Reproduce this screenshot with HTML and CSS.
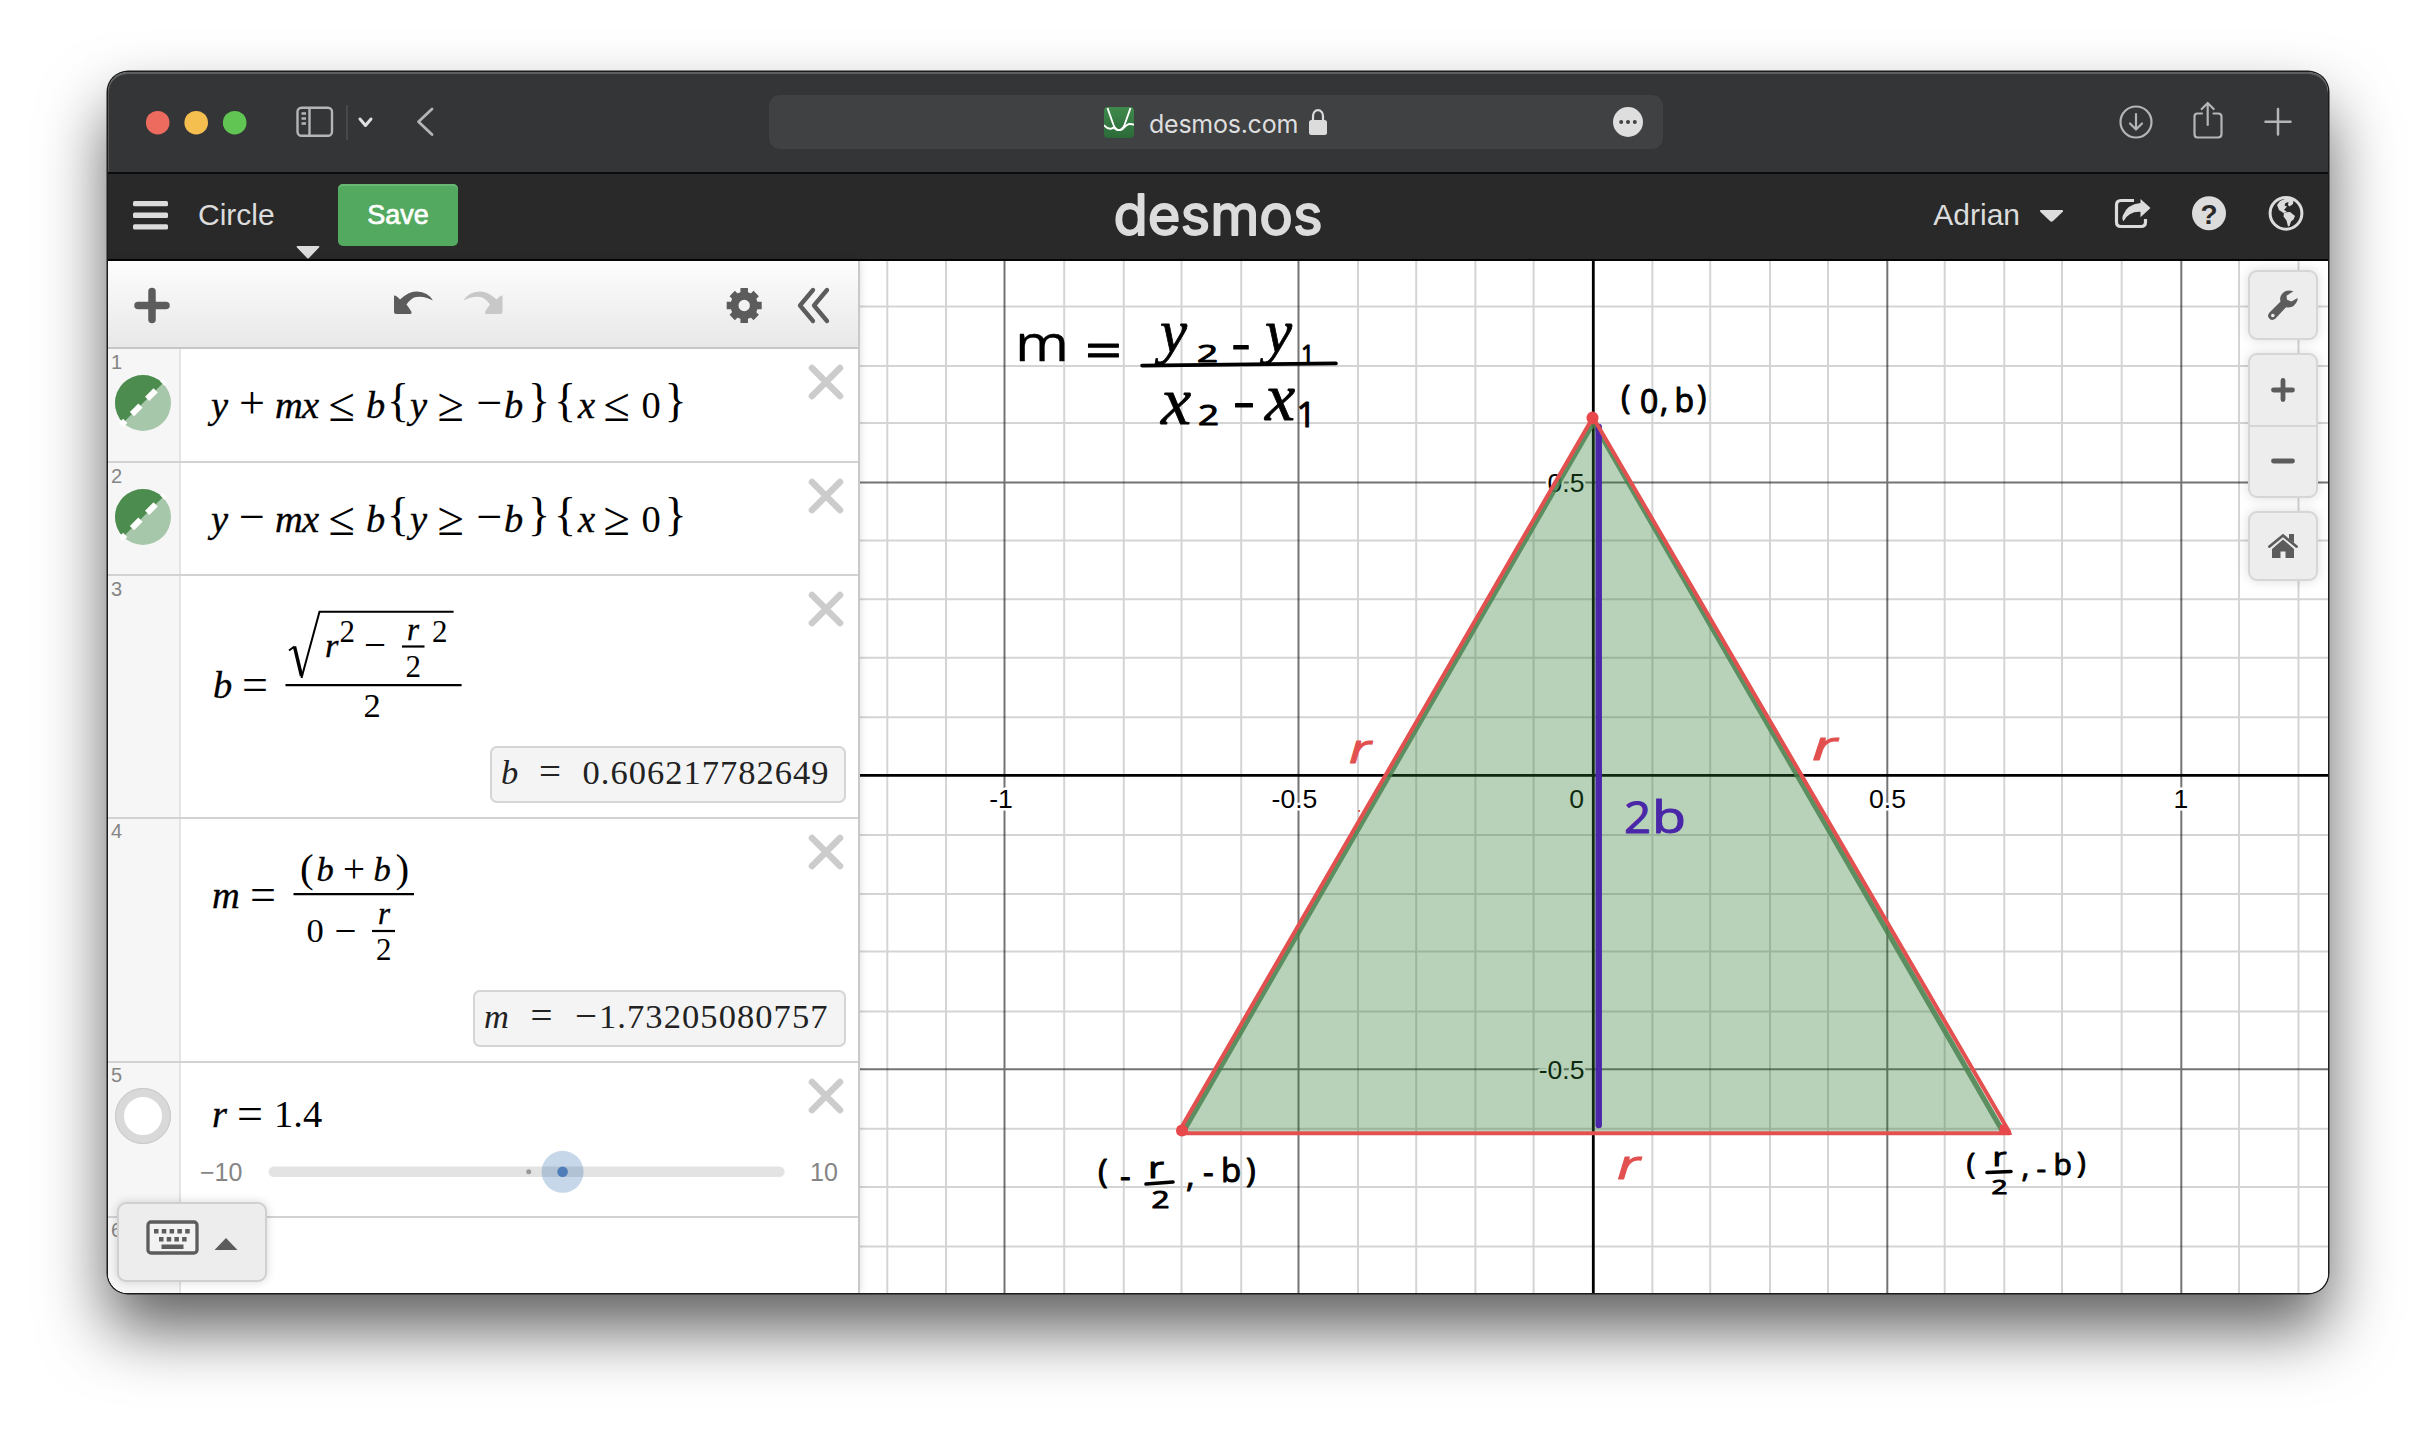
FILE: index.html
```html
<!DOCTYPE html>
<html lang="en">
<head>
<meta charset="utf-8">
<title>Circle | Desmos</title>
<link rel="stylesheet" href="styles.css">
</head>
<body>
<svg class="defs" width="0" height="0" aria-hidden="true">
  <defs>
    <symbol id="close" viewBox="0 0 36 36"><path d="M4 4 32 32M32 4 4 32" fill="none" stroke="#ccc" stroke-width="6.6" stroke-linecap="round"/></symbol>
    <symbol id="region" viewBox="0 0 60 60">
      <circle cx="30" cy="30" r="28" fill="#a7c7aa"/>
      <path d="M10.200 49.800A28 28 0 0 1 49.800 10.200Z" fill="#4d8c4f"/>
      <path d="M8 52 52 8" fill="none" stroke="#fff" stroke-width="6" stroke-dasharray="12 9.500" stroke-dashoffset="6"/>
    </symbol>
  </defs>
</svg>
<main class="window">
  <header class="titlebar">
    <svg class="title-left" viewBox="108 72 661 100" width="661" height="100">
      <circle cx="157.7" cy="122.7" r="11.8" fill="#ed6a5f"/>
      <circle cx="196.2" cy="122.7" r="11.8" fill="#f5bf4f"/>
      <circle cx="234.7" cy="122.7" r="11.8" fill="#61c554"/>
      <g fill="none" stroke="#b4b5b7" stroke-width="2.4">
        <rect x="297.500" y="107.700" width="34.500" height="28" rx="4"/>
        <path d="M309.500 108v28M301.500 113.500h4.500M301.500 118.500h4.500M301.500 123.500h4.500"/>
        <path d="M432 109 418.500 121.700 432 134.500" stroke-width="2.8" stroke-linecap="round" stroke-linejoin="round"/>
      </g>
      <path d="M347 105v35" stroke="#48494b" stroke-width="2"/>
      <path d="M360 119l5.500 6.500 5.500-6.500" fill="none" stroke="#e0e0e0" stroke-width="3" stroke-linecap="round" stroke-linejoin="round"/>
    </svg>
    <div class="address">
      <svg class="favicon" viewBox="0 0 30 31" width="30" height="31">
        <defs><linearGradient id="fav" x2="0" y2="1"><stop stop-color="#3f8a4b"/><stop offset="1" stop-color="#2b6a38"/></linearGradient></defs>
        <rect width="30" height="31" rx="4" fill="url(#fav)"/>
        <g fill="none" stroke="#fff" stroke-width="1.900"><path d="M3.500 1 9.500 18Q12.500 25 18 22.500 23 17 26 17T30 18"/><path d="M26.500 1 20.500 18Q17.500 25 12 22.500L9.500 20.500Q5 24 0 18"/></g>
      </svg>
      <span class="domain">desmos.com</span>
      <svg class="lock" viewBox="0 0 20 28" width="20" height="28"><path d="M5 13V8a5 5.800 0 0 1 10 0v5" fill="none" stroke="#dcdcdc" stroke-width="2.200"/><rect x="1" y="12" width="18" height="15" rx="2.500" fill="#dcdcdc"/></svg>
      <svg class="more" viewBox="0 0 30 30" width="30" height="30"><circle cx="15" cy="15" r="15" fill="#dedede"/><g fill="#404143"><circle cx="8.200" cy="15" r="2"/><circle cx="15" cy="15" r="2"/><circle cx="21.800" cy="15" r="2"/></g></svg>
    </div>
    <svg class="title-right" viewBox="2100 72 228 100" width="228" height="100">
      <g fill="none" stroke="#b4b5b7" stroke-width="2.200" stroke-linecap="round" stroke-linejoin="round">
        <circle cx="2136" cy="122" r="15.500"/>
        <path d="M2136 114v15M2130 123.500l6 6 6-6"/>
        <path d="M2202 113.500h-4.500q-3 0-3 3v17.500q0 3.500 3 3.500h20.500q3.500 0 3.500-3.500v-17.500q0-3-3.500-3h-4.500M2207.700 125v-21M2201.700 109l6-6 6 6"/>
        <path d="M2265.500 121.700h25M2278 109v25.500" stroke-width="2.500"/>
      </g>
    </svg>
  </header>

  <nav class="appbar">
    <div class="appbar-left">
      <svg viewBox="0 0 35 30" width="35" height="30"><g fill="#dcdcdc"><rect y="1" width="35" height="5.300" rx="1.500"/><rect y="12.600" width="35" height="5.300" rx="1.500"/><rect y="24.200" width="35" height="5.300" rx="1.500"/></g></svg>
      <span class="graph-name">Circle</span>
      <svg class="name-caret" viewBox="0 0 24 14" width="24" height="14"><path d="M1.500 1h21q1.500 0 .500 1.500L13 13q-1 1-2 0L1 2.500Q0 1 1.500 1z" fill="#dcdcdc"/></svg>
      <button class="save">Save</button>
    </div>
    <svg class="logo" viewBox="1100 176 240 84" width="240" height="84"><text x="1113.500" y="235" textLength="209" lengthAdjust="spacingAndGlyphs">desmos</text></svg>
    <div class="appbar-right">
      <span class="user">Adrian</span>
      <svg viewBox="2032 176 296 84" width="296" height="84">
        <path d="M2041 210h21q2 .500.500 2l-9.500 9q-1.500 1.300-3 0l-9.500-9q-1.500-1.500.500-2z" fill="#dcdcdc"/>
        <path d="M2134 200.500h-13q-4.500 0-4.500 4.500v17q0 4.500 4.500 4.500h20q4.500 0 4.500-4.500v-3" fill="none" stroke="#dcdcdc" stroke-width="3.200"/>
        <path d="M2140.500 199l9.500 8.500q.500.500 0 1l-9.500 8.800v-5.500q-12-.500-17 9.500-2-2.500-.500-6 4-11 17.500-12.300z" fill="#dcdcdc"/>
        <circle cx="2209" cy="213.300" r="17" fill="#dcdcdc"/>
        <text class="question" x="2209" y="223.500">?</text>
        <circle cx="2286" cy="213.300" r="15.900" fill="none" stroke="#dcdcdc" stroke-width="3"/>
        <path d="M2277 205l3-4 6-2.500 7.500 1-.500 4.500-3.500 2.500-1.500-1.500.500-3-3 1-1 2.500 2.500 1-3 3.500 3 1.500-3.500 1.500-4.500-3z" fill="#dcdcdc"/>
        <path d="M2284 212.500l6-.500 5 4-1.500 3.500-2.500 2-1.500 4.500-1.500.500-1.500-6-3-4z" fill="#dcdcdc"/>
      </svg>
    </div>
  </nav>

  <section class="workspace">
    <aside class="panel">
      <div class="toolbar">
        <svg viewBox="108 261 748 86" width="748" height="86">
          <path d="M152 291.500v28M138 305.500h28" stroke="#5c5c5c" stroke-width="7.500" stroke-linecap="round"/>
          <path d="M394 295.500q2-.500 6 4 9-8.500 17-8 11 .500 16 9-9-5-17-3.500-5 1-9.500 7.500 2 2.500 4.500 6.500 1.500 3-1 3h-14q-2 0-2-2z" fill="#5c5c5c"/>
          <path d="M502.500 295.500q-2-.500-6 4-9-8.500-17-8-11 .500-16 9 9-5 17-3.500 5 1 9.500 7.500-2 2.500-4.500 6.500-1.500 3 1 3h14q2 0 2-2z" fill="#c8c8c8"/>
          <g transform="translate(744.200 305.500)"><circle r="9.700" fill="none" stroke="#5c5c5c" stroke-width="8"/><g stroke="#5c5c5c" stroke-width="7.500"><path d="M0-17.500V-10M0 17.500V10M-17.500 0H-10M17.500 0H10M-12-12-8-8M12 12 8 8M-12 12-8 8M12-12 8-8"/></g></g>
          <path d="M813 290 800 305.500 813 321M827 290 814 305.500 827 321" fill="none" stroke="#5c5c5c" stroke-width="4.300" stroke-linecap="round" stroke-linejoin="round"/>
        </svg>
      </div>

      <div class="row row-1">
        <div class="gutter"><span>1</span><svg class="badge" width="60" height="60"><use href="#region"/></svg></div>
        <div class="cell">
          <svg class="eq" viewBox="180 349 610 112" width="610" height="112">
            <text y="418" class="v"><tspan x="211">y</tspan><tspan x="275">m</tspan><tspan x="302">x</tspan><tspan x="366">b</tspan><tspan x="410">y</tspan><tspan x="504">b</tspan><tspan x="578">x</tspan></text>
            <text y="418" class="o"><tspan x="239">+</tspan><tspan x="476.500">−</tspan></text>
            <text y="418" class="n" x="641.500">0</text>
            <text y="421" class="rel"><tspan x="328.500">≤</tspan><tspan x="437.500">≥</tspan><tspan x="603.500">≤</tspan></text>
            <text y="416" class="brace"><tspan x="387">{</tspan><tspan x="528">}</tspan><tspan x="554">{</tspan><tspan x="664.500">}</tspan></text>
          </svg>
          <svg class="x" width="36" height="36"><use href="#close"/></svg>
        </div>
      </div>

      <div class="row row-2">
        <div class="gutter"><span>2</span><svg class="badge" width="60" height="60"><use href="#region"/></svg></div>
        <div class="cell">
          <svg class="eq" viewBox="180 349 610 111" width="610" height="111">
            <text y="418" class="v"><tspan x="211">y</tspan><tspan x="275">m</tspan><tspan x="302">x</tspan><tspan x="366">b</tspan><tspan x="410">y</tspan><tspan x="504">b</tspan><tspan x="578">x</tspan></text>
            <text y="418" class="o"><tspan x="239">−</tspan><tspan x="476.500">−</tspan></text>
            <text y="418" class="n" x="641.500">0</text>
            <text y="421" class="rel"><tspan x="328.500">≤</tspan><tspan x="437.500">≥</tspan><tspan x="603.500">≥</tspan></text>
            <text y="416" class="brace"><tspan x="387">{</tspan><tspan x="528">}</tspan><tspan x="554">{</tspan><tspan x="664.500">}</tspan></text>
          </svg>
          <svg class="x" width="36" height="36"><use href="#close"/></svg>
        </div>
      </div>

      <div class="row row-3">
        <div class="gutter"><span>3</span></div>
        <div class="cell">
          <svg class="eq" viewBox="180 576 610 170" width="610" height="170">
            <text y="697.500" class="v" x="213">b</text><text y="699.500" class="o" x="242">=</text>
            <path d="M285.500 685.200H461.600" class="bar"/>
            <path d="M289 650.500 294.500 646.500" class="thin"/><path d="M294.500 646.500 301.500 676" stroke="#000" stroke-width="3.400"/><path d="M301.500 678 319.500 611.700H453.600" class="thin"/>
            <text y="656.500" class="v s34" x="325">r</text>
            <text y="641.700" class="n s31" x="339.500">2</text>
            <text y="658" class="o s34" x="364">−</text>
            <path d="M402 646.500h22.500" class="bar"/>
            <text y="640" class="v s31" x="407">r</text><text y="676.500" class="n s31" x="405.500">2</text>
            <text y="641.700" class="n s31" x="432">2</text>
            <text y="716.500" class="n s34" x="363.500">2</text>
          </svg>
          <svg class="x" width="36" height="36"><use href="#close"/></svg>
          <output class="value value-b"><svg viewBox="490 746 356 57" width="356" height="57"><text y="783.500" class="v s34 g" x="501">b</text><text y="784.500" class="o s34 g" x="539">=</text><text y="783.500" class="n s34 g" x="582.500" textLength="246">0.606217782649</text></svg></output>
        </div>
      </div>

      <div class="row row-4">
        <div class="gutter up"><span>4</span></div>
        <div class="cell">
          <svg class="eq" viewBox="180 819 610 170" width="610" height="170">
            <text y="907.500" class="v" x="212">m</text><text y="909.500" class="o" x="250">=</text>
            <path d="M293.500 894.200H414" class="bar"/>
            <text y="881.500" class="paren"><tspan x="300">(</tspan><tspan x="395.500">)</tspan></text>
            <text y="880.500" class="v s34"><tspan x="316.500">b</tspan><tspan x="373.500">b</tspan></text>
            <text y="882" class="o s34" x="343">+</text>
            <text y="942.300" class="n s34" x="306.500">0</text><text y="943.500" class="o s34" x="334.500">−</text>
            <path d="M372 931h23" class="bar"/>
            <text y="924" class="v s31" x="378">r</text><text y="960.300" class="n s31" x="376">2</text>
          </svg>
          <svg class="x" width="36" height="36"><use href="#close"/></svg>
          <output class="value value-m"><svg viewBox="473 990 373 57" width="373" height="57"><text y="1027.500" class="v s34 g" x="484">m</text><text y="1028.500" class="o s34 g" x="530.500">=</text><text y="1028.500" class="o s34 g" x="575">−</text><text y="1027.500" class="n s34 g" x="599" textLength="228.500">1.73205080757</text></svg></output>
        </div>
      </div>

      <div class="row row-5">
        <div class="gutter up"><span>5</span><svg class="badge" viewBox="0 0 60 60" width="60" height="60"><circle cx="30" cy="30" r="23.500" fill="#fff" stroke="#d9d9d9" stroke-width="9"/><circle cx="30" cy="30" r="27.500" fill="none" stroke="#c8c8c8"/></svg></div>
        <div class="cell">
          <svg class="eq" viewBox="180 1063 610 70" width="610" height="70">
            <text y="1126.500" class="v" x="212">r</text><text y="1128.500" class="o" x="237">=</text><text y="1126.500" class="n" x="274">1.4</text>
          </svg>
          <svg class="x" width="36" height="36"><use href="#close"/></svg>
          <div class="slider"><span>−10</span>
            <svg viewBox="265 1150 524 44" width="524" height="44"><rect x="268.600" y="1166.500" width="516" height="10.500" rx="5.200" fill="#e3e3e3"/><circle cx="528.700" cy="1171.800" r="2.500" fill="#999"/><circle cx="562.600" cy="1171.800" r="21" fill="#2f6bb0" fill-opacity=".27"/><circle cx="562.600" cy="1171.800" r="5.300" fill="#4f7db8"/></svg>
            <span>10</span></div>
        </div>
      </div>

      <div class="row row-6"><div class="gutter up"><span>6</span></div><div class="cell"></div></div>

      <button class="keypad">
        <svg viewBox="0 0 92 36" width="92" height="36">
          <rect x="2" y="3" width="49" height="31" rx="3" fill="#f2f2f2" stroke="#5c5c5c" stroke-width="3.300"/>
          <g fill="#5c5c5c"><path d="M8 10h4.500v4.500H8zM15.800 10h4.500v4.500h-4.500zM23.600 10h4.500v4.500h-4.500zM31.400 10h4.500v4.500h-4.500zM39.200 10h4.500v4.500h-4.500zM13 18h4.500v4.500H13zM20.700 18h4.500v4.500h-4.500zM28.400 18h4.500v4.500h-4.500zM36.100 18h4.500v4.500h-4.500zM15.500 25.500h22v4.500h-22z"/><path d="M68.500 31 80 19 91.500 31z"/></g>
        </svg>
      </button>
    </aside>

    <div class="graph">
      <svg class="plot" viewBox="860 261 1468 1032" width="1468" height="1032">
        <path class="minor" d="M887.300 261V1293M946 261V1293M1064.200 261V1293M1123.800 261V1293M1181.500 261V1293M1241.200 261V1293M1358 261V1293M1416.200 261V1293M1475.400 261V1293M1533.600 261V1293M1652.400 261V1293M1710.200 261V1293M1770 261V1293M1828 261V1293M1944.700 261V1293M2004.300 261V1293M2062 261V1293M2121.700 261V1293M2239 261V1293M2298.500 261V1293M858 306.500H2328M858 366H2328M858 423H2328M858 540.500H2328M858 599.300H2328M858 657.700H2328M858 717.300H2328M858 835H2328M858 894H2328M858 951.500H2328M858 1011.500H2328M858 1128.700H2328M858 1187H2328M858 1246.500H2328"/>
        <path class="major" d="M1004.500 261V1293M1298.500 261V1293M1887.300 261V1293M2181.300 261V1293M858 482.500H2328M858 1069.300H2328"/>
        <path class="axis" d="M1593.300 261V1293M858 775.400H2328"/>
        <g class="label">
          <text x="1001" y="808" text-anchor="middle">-1</text>
          <text x="1294.500" y="808" text-anchor="middle">-0.5</text>
          <text x="1584" y="808" text-anchor="end">0</text>
          <text x="1887.500" y="808" text-anchor="middle">0.5</text>
          <text x="2181" y="808" text-anchor="middle">1</text>
          <text x="1584.500" y="491.500" text-anchor="end">0.5</text>
          <text x="1584.500" y="1078.500" text-anchor="end">-0.5</text>
        </g>
        <path d="M1593 419 1181 1131.500H2005z" fill="#2b7a2f" fill-opacity=".34"/>
        <path d="M1184 1130 1593.500 422 2002 1130" fill="none" stroke="#4b8350" stroke-opacity=".85" stroke-width="5.500"/>
        <path d="M1598.700 427V1125" stroke="#4a27a8" stroke-width="6.500" stroke-linecap="round"/>
        <g fill="none" stroke="#e2504f" stroke-width="4" stroke-linecap="round"><path d="M1179 1131.500 1592 419"/><path d="M1594 419 2009 1131.500"/><path d="M1179 1133.300H2009.500"/></g>
        <g fill="#e8474b"><ellipse cx="1592.500" cy="418" rx="6" ry="6.500"/><circle cx="1182" cy="1130.500" r="6"/><path d="M2000 1125l6-1 6 11h-13z"/></g>

        <g class="ink">
          <text class="sans" x="1015" y="360.500" font-size="50" textLength="54" lengthAdjust="spacingAndGlyphs">m</text>
          <text class="sans bold" x="1085" y="367" font-size="48" textLength="37" lengthAdjust="spacingAndGlyphs">=</text>
          <text class="curl" font-size="61"><tspan x="1160" y="352">y</tspan><tspan x="1265" y="352">y</tspan></text>
          <text class="curl" font-size="68"><tspan x="1161" y="424">x</tspan><tspan x="1265" y="420">x</tspan></text>
          <text class="sans bold" x="1197" y="362" font-size="23" textLength="21" lengthAdjust="spacingAndGlyphs">2</text>
          <text class="sans bold" x="1301" y="362" font-size="23">1</text>
          <text class="sans bold" x="1198" y="425" font-size="27" textLength="21" lengthAdjust="spacingAndGlyphs">2</text>
          <text class="sans bold" x="1296.500" y="427" font-size="34">1</text>
          <text class="sans bold" x="1231.500" y="360" font-size="48" textLength="19" lengthAdjust="spacingAndGlyphs">-</text>
          <text class="sans bold" x="1233" y="418" font-size="48" textLength="22" lengthAdjust="spacingAndGlyphs">-</text>
          <path d="M1142 365.600 1336 363.400"/>
          <text class="sans bold" font-size="32"><tspan x="1621" y="409">(</tspan><tspan x="1640" y="412.500">0</tspan><tspan x="1660" y="412">,</tspan><tspan x="1674.500" y="412">b</tspan><tspan x="1697" y="409">)</tspan></text>
          <text class="sans bold" font-size="33"><tspan x="1098" y="1182.500">(</tspan><tspan x="1120" y="1188">-</tspan><tspan x="1203" y="1184">-</tspan><tspan x="1186" y="1187">,</tspan><tspan x="1221" y="1182">b</tspan><tspan x="1246" y="1181.500">)</tspan></text>
          <text class="sans bold" x="1148" y="1178" font-size="29" textLength="16" lengthAdjust="spacingAndGlyphs">r</text><text class="sans bold" x="1151.500" y="1208" font-size="23" textLength="18" lengthAdjust="spacingAndGlyphs">2</text>
          <path d="M1146 1184 1173 1182"/>
          <text class="sans bold" font-size="30"><tspan x="1966.500" y="1173.500">(</tspan><tspan x="2021.500" y="1177">,</tspan><tspan x="2036.500" y="1178.500">-</tspan><tspan x="2053.500" y="1174.500">b</tspan><tspan x="2077" y="1173">)</tspan></text>
          <text class="sans bold" x="1992.500" y="1166" font-size="25" textLength="14" lengthAdjust="spacingAndGlyphs">r</text><text class="sans bold" x="1991.500" y="1194" font-size="20" textLength="16" lengthAdjust="spacingAndGlyphs">2</text>
          <path d="M1987 1172.500 2011 1171.500"/>
        </g>
        <g class="ink red">
          <g class="sans bold" font-size="40" font-style="italic"><text x="1349" y="763" textLength="22" lengthAdjust="spacingAndGlyphs">r</text><text x="1812" y="760" textLength="25" lengthAdjust="spacingAndGlyphs">r</text><text x="1617" y="1179" textLength="23" lengthAdjust="spacingAndGlyphs">r</text></g>
          <circle cx="1359" cy="811" r=".6"/>
        </g>
        <g class="ink violet"><text class="sans bold" x="1624" y="832.500" font-size="43" textLength="27" lengthAdjust="spacingAndGlyphs">2</text><text class="sans bold" x="1652" y="832.500" font-size="43" textLength="34" lengthAdjust="spacingAndGlyphs">b</text></g>
      </svg>
      <div class="controls">
        <button class="tool"><svg viewBox="0 0 32 32" width="32" height="32"><path d="M26.500 2.300Q18-.500 14 6.500q-1.500 3-.500 6L2.500 23.500q-3 3.500 0 6.300 3 2.500 6-.3L19 18.300q8 1.800 11.500-7l0-2.300-6 3.500-4.500-1.800-.500-4z" fill="#5c5c5c"/><circle cx="5.800" cy="26.500" r="1.800" fill="#ededed"/></svg></button>
        <div class="zoom">
          <button><svg viewBox="0 0 24 24" width="24" height="24"><path d="M12 2.500v19M2.500 12h19" stroke="#5c5c5c" stroke-width="4.800" stroke-linecap="round"/></svg></button>
          <button><svg viewBox="0 0 24 24" width="24" height="24"><path d="M2.500 12h19" stroke="#5c5c5c" stroke-width="4.800" stroke-linecap="round"/></svg></button>
        </div>
        <button class="tool"><svg viewBox="0 0 30 26" width="30" height="26"><path d="M1.500 13.500 15 2.500l13.500 11" fill="none" stroke="#5c5c5c" stroke-width="2.800" stroke-linecap="round"/><path d="M21 1h5v9l-5-4zM15 6.500l11 9.500v9h-8.500v-6.500h-5V25H4v-9z" fill="#5c5c5c"/></svg></button>
      </div>
    </div>
  </section>
</main>
</body>
</html>
```
FILE: styles.css
```css
* { box-sizing: border-box; }
body { margin: 0; width: 2436px; height: 1436px; overflow: hidden; background: #fff; font-family: "Liberation Sans", Arial, sans-serif; }
svg { display: block; }
button { margin: 0; padding: 0; border: 0; background: none; font: inherit; }
.defs { position: absolute; }

.window {
  margin: 72px 0 0 108px; width: 2220px; height: 1221px; overflow: hidden;
  display: flex; flex-direction: column; border-radius: 20px; background: #fff;
  box-shadow: 0 0 0 1.5px #1c1c1c, 0 36px 66px rgba(0,0,0,.63);
}

.titlebar { height: 100px; flex: none; display: flex; align-items: center; background: #343537; box-shadow: inset 0 2px 0 #5d5f61, inset 1px 0 0 #555; border-radius: 20px 20px 0 0; }
.address { width: 894px; height: 54px; margin: 2px 437px 2px 0; display: flex; align-items: center; border-radius: 11px; background: #404143; padding-left: 335px; }
.domain { font: 25px/54px Inter, sans-serif; color: #dedede; width: 148px; margin: 3px 11px 0 15px; letter-spacing: -.25px; }
.more { margin-left: auto; margin-right: 20px; }

.appbar { height: 89px; flex: none; display: flex; align-items: center; border-top: 2px solid #0c0c0c; border-bottom: 2px solid #050505; background: #292929; color: #dcdcdc; }
.appbar-left { display: flex; align-items: center; width: 992px; padding-left: 25px; margin-top: -3px; }
.graph-name { font-size: 30px; margin-left: 30px; width: 98px; }
.name-caret { margin-top: 73px; }
.save { width: 120px; height: 62px; margin-left: 18px; border-radius: 5px; background: #53a960; color: #fff; font-size: 27px; box-shadow: inset 0 2px 0 #68b673; -webkit-text-stroke: .7px #fff; }
.logo, .appbar-right svg { margin-top: 2px; }
.logo text { font: 400 56px Inter, sans-serif; fill: #dcdcdc; stroke: #dcdcdc; stroke-width: 1.8px; stroke-linejoin: round; }
.appbar-right { flex: 1; display: flex; align-items: center; justify-content: flex-end; }
.user { font-size: 30px; margin: -3px 12px 0 0; }
.question { font: 700 28px "Liberation Sans", sans-serif; fill: #292929; text-anchor: middle; }

.workspace { flex: 1; display: flex; min-height: 0; }
.panel { position: relative; width: 752px; flex: none; display: flex; flex-direction: column; border-right: 2px solid #c9c9c9; background: #fff; box-shadow: 0 0 8px rgba(0,0,0,.14); z-index: 1; }
.toolbar { height: 88px; flex: none; border-bottom: 2px solid #c6c6c6; background: linear-gradient(#fdfdfd, #e8e8e8); }
.row { flex: none; display: flex; border-bottom: 2px solid #d2d2d2; }
.row-1 { height: 114px; }
.row-2 { height: 113px; }
.row-3 { height: 243px; }
.row-4 { height: 244px; }
.row-5 { height: 155px; }
.row-6 { flex: 1; border: 0; }
.gutter { width: 73px; flex: none; border-right: 2px solid #e4e4e4; background: #f6f6f6; color: #858585; font-size: 20px; line-height: 22px; padding: 2px 0 0 3px; }
.gutter.up { padding-top: 1px; }
.badge { margin: 0 0 0 2px; }
.cell { flex: 1; display: grid; grid-template-columns: 610px 1fr; grid-template-rows: auto 1fr; align-content: start; margin-left: -1px; }
.x { margin-top: 15px; margin-left: 18px; }
.value { grid-column: 1 / 3; justify-self: end; margin-right: 12px; height: 57px; border-radius: 7px; background: #f4f4f4; box-shadow: inset 0 0 0 2px #d5d5d5; }
.value-m { margin-top: 1px; }

.eq text, .value text { font-family: "Liberation Serif", "Times New Roman", serif; font-size: 38.5px; fill: #000; }
.eq .v, .value .v { font-style: italic; }
.eq .v { stroke: #000; stroke-width: .35px; }
.eq .o { font-size: 46px; }
.eq .rel { font-size: 48px; }
.eq .brace { font-size: 46px; font-weight: 400; }
.eq .paren { font-size: 41px; }
.eq .s34, .value .s34 { font-size: 34.5px; }
.eq .s31 { font-size: 31px; }
.eq .o.s34, .value .o.s34 { font-size: 39px; }
.value .g { fill: #222; }
.bar { stroke: #000; stroke-width: 2.2px; }
.thin { stroke: #000; stroke-width: 2px; fill: none; }

.slider { grid-column: 1 / 3; display: flex; align-items: center; color: #858585; font-size: 25px; height: 44px; margin-top: 17px; padding-left: 20px; }
.slider span:first-child { width: 65px; }
.slider span:last-child { margin-left: 21px; }

.keypad { position: absolute; left: 9px; bottom: 11px; width: 150px; height: 80px; display: flex; align-items: flex-start; padding: 15px 0 0 27px; border: 2px solid #d0d0d0; border-radius: 9px; background: #ededed; box-shadow: 0 0 10px rgba(0,0,0,.16); }

.graph { position: relative; flex: 1; background: #fff; }
.minor { stroke: #000; stroke-opacity: .17; stroke-width: 2px; }
.major { stroke: #000; stroke-opacity: .55; stroke-width: 2px; }
.axis { stroke: #000; stroke-width: 2.8px; }
.label text { font: 26.6px "Liberation Sans", Arial, sans-serif; fill: #000; stroke: #fff; stroke-width: 5px; stroke-linejoin: round; paint-order: stroke; }
.ink { fill: #000; stroke: #000; stroke-width: 1px; stroke-linecap: round; stroke-linejoin: round; }
.ink path { stroke-width: 3.6px; }
.ink .sans { font-family: "Open Sans", sans-serif; font-weight: 400; stroke-width: .3px; }
.ink .bold { stroke-width: 1px; }
.ink .curl { font-family: "Liberation Serif", serif; font-style: italic; stroke-width: .8px; }
.red { fill: #e2504f; stroke: #e2504f; }
.violet { fill: #4a27a8; stroke: #4a27a8; }

.controls { position: absolute; top: 9px; right: 10px; width: 70px; display: flex; flex-direction: column; gap: 13px; }
.tool, .zoom { border: 2px solid #d6d6d6; border-radius: 9px; background: #ededed; box-shadow: 0 0 12px rgba(0,0,0,.14); }
.tool { height: 70px; display: grid; place-items: center; }
.zoom { height: 145px; display: flex; flex-direction: column; overflow: hidden; }
.zoom button { flex: 1; display: grid; place-items: center; }
.zoom button:first-child { border-bottom: 2px solid #d6d6d6; }
```
